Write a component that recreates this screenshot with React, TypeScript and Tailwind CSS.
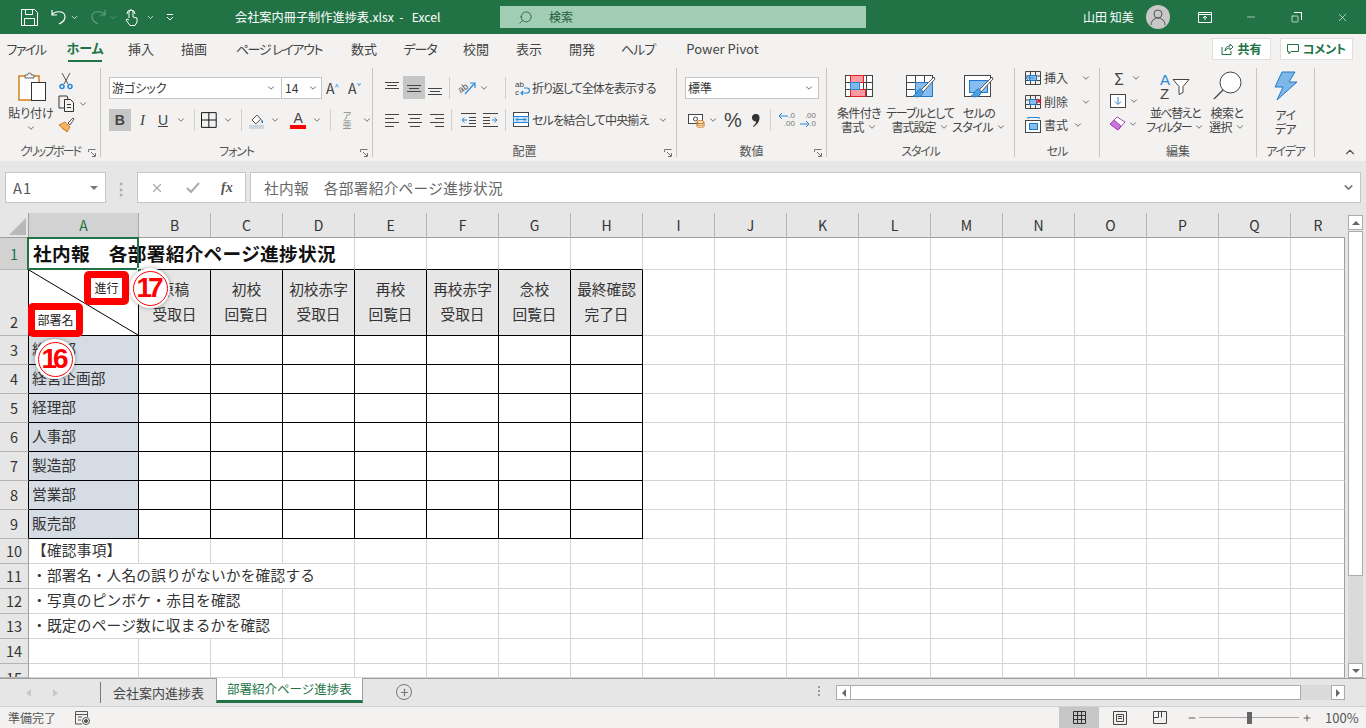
import { ReactNode } from 'react';
import { ChevronDown, ChevronUp, Minus, Plus, Search, Square, X } from 'lucide-react';

const jp = "font-['Noto_Sans_CJK_JP','Noto_Sans',sans-serif]";

const COLS = ['A', 'B', 'C', 'D', 'E', 'F', 'G', 'H', 'I', 'J', 'K', 'L', 'M', 'N', 'O', 'P', 'Q', 'R'];
const ROWS = [1, 2, 3, 4, 5, 6, 7, 8, 9, 10, 11, 12, 13, 14, 15];

const HEAD: string[][] = [
  ['原稿', '受取日'],
  ['初校', '回覧日'],
  ['初校赤字', '受取日'],
  ['再校', '回覧日'],
  ['再校赤字', '受取日'],
  ['念校', '回覧日'],
  ['最終確認', '完了日'],
];

const DEPTS = ['総務部', '経営企画部', '経理部', '人事部', '製造部', '営業部', '販売部'];

const NOTES: Record<number, string> = {
  10: '【確認事項】',
  11: '・部署名・人名の誤りがないかを確認する',
  12: '・写真のピンボケ・赤目を確認',
  13: '・既定のページ数に収まるかを確認',
};

const TABS = [
  { label: 'ファイル', cls: 'ml-[7px] w-[38px] tracking-[-1.5px]' },
  { label: 'ホーム', cls: 'ml-[23px] w-[34px] font-bold text-[#217346] border-b-[2px] border-[#217346]' },
  { label: '挿入', cls: 'ml-[26px] w-[26px]' },
  { label: '描画', cls: 'ml-[27px] w-[26px]' },
  { label: 'ページ レイアウト', cls: 'ml-[29px] w-[86px] tracking-[-1.3px]' },
  { label: '数式', cls: 'ml-[29px] w-[26px]' },
  { label: 'データ', cls: 'ml-[27px] w-[32px] tracking-[-1px]' },
  { label: '校閲', cls: 'ml-[27px] w-[26px]' },
  { label: '表示', cls: 'ml-[27px] w-[26px]' },
  { label: '開発', cls: 'ml-[27px] w-[26px]' },
  { label: 'ヘルプ', cls: 'ml-[27px] w-[32px] tracking-[-1px]' },
  { label: 'Power Pivot', cls: 'ml-[31px] w-[75px]' },
];

function Chev({ className = '' }: { className?: string }) {
  return <ChevronDown className={`w-[10px] h-[10px] text-[#555] shrink-0 ${className}`} strokeWidth={2} />;
}

function Sep({ className = '' }: { className?: string }) {
  return <div className={`w-px h-[22px] bg-[#d2d0ce] shrink-0 ${className}`} />;
}

function Launcher() {
  return (
    <svg width="8" height="8" viewBox="0 0 8 8" fill="none" stroke="#777">
      <path d="M.5 3V.5H7.5M3 3l4 4M7.5 4v3.500H4" />
    </svg>
  );
}

function Group({ label, w, launcher, labelCls = '', children }: { label: string; w: string; launcher?: boolean; labelCls?: string; children: ReactNode }) {
  return (
    <div className={`${w} h-[89px] shrink-0 flex flex-col border-r border-[#c8c6c4]`}>
      <div className="h-[77px] flex-none">{children}</div>
      <div className="h-[12px] grid grid-cols-[1fr_auto_1fr] items-center text-[12px] leading-[12px] text-[#555]">
        <span />
        <span className={labelCls}>{label}</span>
        <span className="flex justify-end pr-[4px] items-end h-full">{launcher && <Launcher />}</span>
      </div>
    </div>
  );
}

function Lines({ rows }: { rows: number[][] }) {
  return (
    <svg width="16" height="16" viewBox="0 0 16 16" stroke="#444" fill="none" className="shrink-0">
      {rows.map((r, i) => (
        <path key={i} d={`M${r[0]} ${r[2]}.5H${r[1]}`} />
      ))}
    </svg>
  );
}

function PasteIcon() {
  return (
    <svg width="30" height="30" viewBox="0 0 30 30" fill="none">
      <rect x="1" y="4" width="20" height="24" fill="#fff" stroke="#d67f16" strokeWidth="1.500" />
      <path d="M7 6V3h2.500a2 2 0 0 1 4 0H16v3z" fill="#f3f2f1" stroke="#666" />
      <rect x="13.500" y="10.500" width="14" height="18" fill="#fff" stroke="#333" />
    </svg>
  );
}

function CutIcon() {
  return (
    <svg width="14" height="18" viewBox="0 0 14 18" fill="none" stroke="#555">
      <path d="M3 1l6 11M11 1L5 12" />
      <circle cx="3" cy="14.500" r="2" stroke="#2b88d8" strokeWidth="1.500" />
      <circle cx="11" cy="14.500" r="2" stroke="#2b88d8" strokeWidth="1.500" />
    </svg>
  );
}

function CopyIcon() {
  return (
    <svg width="17" height="17" viewBox="0 0 17 17" fill="#f3f2f1" stroke="#333">
      <path d="M7 13H1V1h8l1 3" />
      <path d="M6.500 4.500h6l3 3v9h-9zM9 9.500h4M9 12.500h4" />
    </svg>
  );
}

function BrushIcon() {
  return (
    <svg width="17" height="16" viewBox="0 0 17 16" fill="none">
      <path d="M1 8l6-3 5 5-3 5z" fill="#f7b267" stroke="#d67f16" />
      <path d="M4 11l5 3" stroke="#d67f16" />
      <path d="M10 6l5-5 1 1-4 6z" fill="#fff" stroke="#555" />
    </svg>
  );
}

function AlignV({ top }: { top: number }) {
  return <Lines rows={[[1, 15, top], [3, 13, top + 3], [1, 15, top + 6]]} />;
}

function AlignH({ kind }: { kind: 'l' | 'c' | 'r' }) {
  const a = kind === 'l' ? [1, 10] : kind === 'c' ? [3, 13] : [6, 15];
  return <Lines rows={[[1, 15, 2], [a[0], a[1], 6], [1, 15, 10], [a[0], a[1], 14]]} />;
}

function OrientIcon() {
  return (
    <svg width="18" height="16" viewBox="0 0 18 16" fill="none">
      <text x="0" y="11" fontSize="9" fill="#444" transform="rotate(-35 5 8)" className="font-['Liberation_Sans']">ab</text>
      <path d="M7 14L16 4M12 3h5v5" stroke="#2b88d8" strokeWidth="1.200" />
    </svg>
  );
}

function IndentIcon({ flip }: { flip?: boolean }) {
  return (
    <svg width="15" height="14" viewBox="0 0 15 14" fill="none" stroke="#444" className={flip ? '-scale-x-100' : ''}>
      <path d="M0 .5h15M0 13.500h15M8 4.500h7M8 7.500h7M8 10.500h7" />
      <path d="M6 7H1M3.500 4.500L1 7l2.500 2.500" stroke="#2b88d8" />
    </svg>
  );
}

function WrapIcon() {
  return (
    <svg width="16" height="16" viewBox="0 0 16 16" fill="none">
      <text x="0" y="7" fontSize="8" fill="#444" className="font-['Liberation_Sans']">ab</text>
      <text x="0" y="15" fontSize="8" fill="#444" className="font-['Liberation_Sans']">c</text>
      <path d="M6 13h6a2.500 2.500 0 0 0 0-5H9M8 11l-2 2 2 2" stroke="#2b88d8" strokeWidth="1.200" />
    </svg>
  );
}

function MergeIcon() {
  return (
    <svg width="16" height="15" viewBox="0 0 16 15" fill="none">
      <rect x=".5" y=".5" width="15" height="14" fill="#fff" stroke="#444" />
      <rect x=".5" y="4.500" width="15" height="6" fill="#cfe4f7" stroke="#2b88d8" />
      <path d="M3 7.500h10M5 5.500l-2 2 2 2M11 5.500l2 2-2 2" stroke="#2b88d8" />
    </svg>
  );
}

function CurrencyIcon() {
  return (
    <svg width="17" height="16" viewBox="0 0 17 16" fill="none">
      <rect x=".5" y="2.500" width="14" height="9" fill="#fff" stroke="#444" />
      <circle cx="7.500" cy="7" r="2" stroke="#444" />
      <ellipse cx="12.500" cy="10" rx="3.500" ry="1.500" fill="#f3f2f1" stroke="#d67f16" />
      <path d="M9 10v4.500c0 1 7 1 7 0V10M9 12.500c0 1 7 1 7 0" stroke="#d67f16" />
    </svg>
  );
}

function DecIcon({ up }: { up?: boolean }) {
  return (
    <div className="w-[17px] h-[16px] flex flex-col text-[8px] leading-[8px] text-[#777] font-['Liberation_Sans'] items-end relative">
      <span>{up ? '.00' : '.0'}</span>
      <span>{up ? '.0' : '.00'}</span>
      <svg width="10" height="8" viewBox="0 0 10 8" fill="none" stroke="#2b88d8" className={`absolute ${up ? 'top-[8px] -scale-x-100 left-[1px]' : 'top-0 left-0'}`}>
        <path d="M10 4H1M4 1L1 4l3 3" />
      </svg>
    </div>
  );
}

function GridBase({ children }: { children: ReactNode }) {
  return (
    <svg width="30" height="24" viewBox="0 0 30 24" fill="none" className="shrink-0">
      {children}
    </svg>
  );
}

function CondIcon() {
  return (
    <GridBase>
      <rect x=".5" y=".5" width="27" height="21" fill="#fff" stroke="#444" />
      <path d="M9.500 .5v21M18.500 .5v21M21.500 .5v21M.5 7.500h27M.5 14.500h27" stroke="#444" />
      <rect x="5.500" y=".5" width="13" height="7" fill="#ff9aa2" stroke="#d22" />
      <rect x="5.500" y="14.500" width="15" height="7" fill="#ff9aa2" stroke="#d22" />
      <rect x="5.500" y="7.500" width="9" height="7" fill="#7db8e8" stroke="#2b88d8" />
    </GridBase>
  );
}

function TableStyleIcon({ cell }: { cell?: boolean }) {
  return (
    <GridBase>
      <rect x=".5" y=".5" width="26" height="21" fill="#fff" stroke="#444" />
      {cell ? (
        <rect x="5.500" y="5.500" width="18" height="12" fill="#86bdf0" stroke="#1f78c8" />
      ) : (
        <>
          <path d="M9.500 .5v21M18.500 .5v21M.5 7.500h26M.5 14.500h26" stroke="#444" />
          <rect x="9.500" y="7.500" width="17" height="14" fill="#86bdf0" stroke="#1f78c8" />
        </>
      )}
      <path d="M29 4L17 17l-3 1 2-4L28 2z" fill="#fff" stroke="#555" />
      <path d="M15 14c-4 0-4 5-8 7 5 2 10 0 10-4z" fill="#4aa0e0" stroke="#2b78b8" />
    </GridBase>
  );
}

function CellRowIcon({ kind }: { kind: 'ins' | 'del' | 'fmt' }) {
  return (
    <svg width="17" height="16" viewBox="0 0 17 16" fill="none" className="shrink-0">
      {kind === 'fmt' ? (
        <>
          <path d="M3 .5h11M3 0v2M14 0v2" stroke="#2b88d8" />
          <rect x=".5" y="3.500" width="15" height="12" fill="#fff" stroke="#444" />
          <rect x="4.500" y="6.500" width="8" height="6" fill="#86bdf0" stroke="#1f78c8" />
        </>
      ) : (
        <>
          <path d="M.5 1.500h15v13H.5zM.5 6h15M.5 10.500h15M5.500 1.500v13M10.500 1.500v13" stroke="#444" />
          <rect x="4.500" y="5.500" width="7" height="5" fill="#86bdf0" stroke="#1f78c8" />
          {kind === 'ins' ? (
            <path d="M9 8H1M3.500 5.500L1 8l2.500 2.500" stroke="#2b88d8" fill="none" />
          ) : (
            <path d="M12 5l4 4M16 5l-4 4" stroke="#e81123" strokeWidth="1.500" />
          )}
        </>
      )}
    </svg>
  );
}

function SortIcon() {
  return (
    <svg width="31" height="30" viewBox="0 0 31 30" fill="none">
      <text x="0" y="14" fontSize="15" fill="#2b88d8" className="font-['Liberation_Sans']">A</text>
      <text x="0" y="28" fontSize="15" fill="#444" className="font-['Liberation_Sans']">Z</text>
      <path d="M13 8.500h16l-6 7v6l-4 2v-8z" fill="#fff" stroke="#444" />
    </svg>
  );
}

function LensIcon() {
  return (
    <svg width="31" height="30" viewBox="0 0 31 30" fill="none" stroke="#444">
      <circle cx="18.500" cy="11.500" r="10.500" fill="#fff" />
      <path d="M11 19L1 29" strokeWidth="1.300" />
    </svg>
  );
}

function BoltIcon() {
  return (
    <svg width="24" height="30" viewBox="0 0 24 30" fill="none">
      <path d="M8 1h13l-6 10h8L3 29l6-13H1z" fill="#7db8e8" stroke="#1f78c8" />
    </svg>
  );
}

function LargeText({ a, b, chev, className = 'tracking-[-0.6px]' }: { a: string; b: string; chev?: boolean; className?: string }) {
  return (
    <div className={`flex flex-col items-center text-[12px] leading-[14px] text-[#444] whitespace-nowrap mt-[7px] ${className}`}>
      <span>{a}</span>
      <span className="flex items-center gap-[3px]">
        {b}
        {chev && <Chev />}
      </span>
    </div>
  );
}

function Ribbon() {
  return (
    <div className={`h-[97px] bg-[#f3f2f1] flex pt-[4px] [font-feature-settings:'palt'] ${jp}`}>
      <Group label="クリップボード" w="w-[101px]" launcher labelCls="tracking-[-2px]">
        <div className="flex pt-[4px]">
          <div className="w-[56px] ml-[3px] flex flex-col items-center">
            <div className="pl-[4px]"><PasteIcon /></div>
            <div className="text-[12px] leading-[14px] text-[#444] mt-[4px]">貼り付け</div>
            <Chev className="mt-[3px]" />
          </div>
          <div className="flex flex-col gap-[5px]">
            <div><CutIcon /></div>
            <div className="flex items-center gap-[3px] -ml-[1px]"><CopyIcon /><Chev /></div>
            <div className="-ml-[1px]"><BrushIcon /></div>
          </div>
        </div>
      </Group>

      <Group label="フォント" w="w-[272px]" launcher labelCls="tracking-[-1.200px]">
        <div className="pl-[8px] pt-[9px] flex flex-col">
          <div className="flex items-center h-[22px]">
            <div className="w-[173px] h-[22px] bg-white border border-[#c8c6c4] flex items-center justify-between px-[2px] pr-[5px] text-[12px] text-[#333]">游ゴシック<Chev /></div>
            <div className="w-[40px] h-[22px] bg-white border border-l-0 border-[#c8c6c4] flex items-center justify-between px-[3px] text-[12px] text-[#333]">14<Chev /></div>
            <span className="ml-[4px] w-[22px] text-[#444] text-[14px]">A<sup className="text-[#2b88d8] text-[8px]">^</sup></span>
            <span className="w-[20px] text-[#444] text-[14px]">A<sup className="text-[#2b88d8] text-[8px]">ˇ</sup></span>
          </div>
          <div className="flex items-center h-[22px] mt-[10px] text-[#444]">
            <div className="w-[22px] h-[22px] bg-[#c6c6c6] flex items-center justify-center font-bold text-[14px] font-['Liberation_Sans']">B</div>
            <div className="w-[22px] text-center italic text-[15px] ml-[1px] font-['Liberation_Serif']">I</div>
            <div className="w-[20px] text-center underline text-[14px] font-['Liberation_Sans']">U</div>
            <Chev className="ml-[3px]" />
            <Sep className="ml-[8px]" />
            <svg width="16" height="16" viewBox="0 0 16 16" fill="none" stroke="#111" className="ml-[6px]"><path d="M.5 .5h15v15H.5zM8 .5v15M.5 8h15" /></svg>
            <Chev className="ml-[6px]" />
            <Sep className="ml-[8px]" />
            <svg width="16" height="17" viewBox="0 0 16 17" fill="none" className="ml-[7px]">
              <path d="M3 8l5-5 4 4-5 5z" fill="#fff" stroke="#444" />
              <path d="M13 7c1 2 2 3 1 4s-2-1-1-4z" fill="#2b78b8" />
              <rect x="0" y="13" width="16" height="4" fill="#ccd6e0" />
            </svg>
            <Chev className="ml-[6px]" />
            <div className="ml-[10px] w-[16px] flex flex-col items-center">
              <span className="text-[14px] leading-[14px] font-['Liberation_Sans']">A</span>
              <span className="w-[16px] h-[4px] bg-[#ff0000]" />
            </div>
            <Chev className="ml-[6px]" />
            <Sep className="ml-[8px]" />
            <div className="ml-[9px] w-[14px] flex flex-col items-center text-[9px] leading-[9px] text-[#888]"><span>ア</span><span>亜</span></div>
            <Chev className="ml-[8px]" />
          </div>
        </div>
      </Group>

      <Group label="配置" w="w-[304px]" launcher>
        <div className="pl-[11px] pt-[8px] flex flex-col">
          <div className="flex items-center h-[23px]">
            <AlignV top={2} />
            <div className="ml-[3px] w-[22px] h-[23px] bg-[#c6c6c6] flex items-center justify-center"><AlignV top={5} /></div>
            <div className="ml-[2px]"><AlignV top={8} /></div>
            <Sep className="ml-[6px]" />
            <div className="ml-[8px]"><OrientIcon /></div>
            <Chev className="ml-[3px]" />
            <Sep className="ml-[16px]" />
            <div className="ml-[9px]"><WrapIcon /></div>
            <span className="ml-[1px] text-[12px] text-[#444] tracking-[-1px]">折り返して全体を表示する</span>
          </div>
          <div className="flex items-center h-[23px] mt-[9px]">
            <AlignH kind="l" />
            <div className="ml-[7px]"><AlignH kind="c" /></div>
            <div className="ml-[6px]"><AlignH kind="r" /></div>
            <Sep className="ml-[6px]" />
            <div className="ml-[9px]"><IndentIcon /></div>
            <div className="ml-[7px]"><IndentIcon flip /></div>
            <Sep className="ml-[7px]" />
            <div className="ml-[7px]"><MergeIcon /></div>
            <span className="ml-[3px] text-[12px] text-[#444] tracking-[-0.800px]">セルを結合して中央揃え</span>
            <Chev className="ml-[9px]" />
          </div>
        </div>
      </Group>

      <Group label="数値" w="w-[150px]" launcher>
        <div className="pl-[8px] pt-[9px] flex flex-col">
          <div className="w-[134px] h-[22px] bg-white border border-[#c8c6c4] flex items-center justify-between pl-[2px] pr-[4px] text-[12px] text-[#333]">標準<Chev /></div>
          <div className="flex items-center h-[22px] mt-[10px] text-[#444]">
            <div className="ml-[3px]"><CurrencyIcon /></div>
            <Chev className="ml-[3px]" />
            <span className="ml-[5px] w-[20px] text-[20px] leading-[22px] font-['Liberation_Sans'] text-center">%</span>
            <svg width="8" height="13" viewBox="0 0 8 13" className="ml-[9px]" fill="#333"><path d="M3.500 0a3.500 3.500 0 0 1 4 4c0 4-3 7-6 9l-.5-1c2-1.500 3-3 3-4.500C2 7.500 0 6 0 4a3.500 3.500 0 0 1 3.500-4z" /></svg>
            <Sep className="ml-[10px]" />
            <div className="ml-[7px]"><DecIcon /></div>
            <div className="ml-[4px]"><DecIcon up /></div>
          </div>
        </div>
      </Group>

      <Group label="スタイル" w="w-[188px]" labelCls="tracking-[-1.200px]">
        <div className="flex pt-[7px]">
          <div className="w-[62px] ml-[1px] flex flex-col items-center"><div className="pl-[2px]"><CondIcon /></div><LargeText a="条件付き" b="書式" chev /></div>
          <div className="w-[60px] flex flex-col items-center"><div className="pl-[2px]"><TableStyleIcon /></div><LargeText a="テーブルとして" b="書式設定" chev className="tracking-[-1px]" /></div>
          <div className="w-[58px] flex flex-col items-center"><TableStyleIcon cell /><LargeText a="セルの" b="スタイル" chev /></div>
        </div>
      </Group>

      <Group label="セル" w="w-[85px]" labelCls="tracking-[-1px]">
        <div className="pl-[10px] pt-[2px] flex flex-col gap-[7.500px] text-[12px] leading-[16px] text-[#444]">
          <div className="flex items-center"><CellRowIcon kind="ins" /><span className="ml-[2px] w-[37px]">挿入</span><Chev /></div>
          <div className="flex items-center"><CellRowIcon kind="del" /><span className="ml-[2px] w-[37px]">削除</span><Chev /></div>
          <div className="flex items-center"><CellRowIcon kind="fmt" /><span className="ml-[2px] w-[29px]">書式</span><Chev /></div>
        </div>
      </Group>

      <Group label="編集" w="w-[157px]">
        <div className="flex pt-[2px]">
          <div className="ml-[9px] w-[38px] flex flex-col gap-[7px] text-[#444]">
            <div className="flex items-center h-[16px]"><span className="w-[20px] text-center text-[16px] leading-[16px]">Σ</span><Chev className="ml-[2px]" /></div>
            <div className="flex items-center h-[16px]">
              <svg width="16" height="16" viewBox="0 0 16 16" fill="none" className="ml-[1px]"><rect x=".5" y="1.500" width="15" height="13" fill="#fff" stroke="#444" /><path d="M8 4v7M5 8.500l3 3 3-3" stroke="#2b88d8" /></svg>
              <Chev className="ml-[3px]" />
            </div>
            <div className="flex items-center h-[16px]">
              <svg width="17" height="16" viewBox="0 0 17 16" fill="none"><path d="M1 8l7-7 8 5-7 8z" fill="#fff" stroke="#a644b8" /><path d="M1 8l4-4 7 6-3 4z" fill="#c878d8" stroke="#a644b8" /></svg>
              <Chev className="ml-[2px]" />
            </div>
          </div>
          <div className="w-[52px] ml-[2px] flex flex-col items-center pt-[1px]"><div className="h-[28px] overflow-hidden"><SortIcon /></div><LargeText a="並べ替えと" b="フィルター" chev className="tracking-[-1.500px]" /></div>
          <div className="w-[30px] ml-[11px] flex flex-col items-center pt-[1px]"><div className="h-[28px] overflow-hidden"><LensIcon /></div><LargeText a="検索と" b="選択" chev /></div>
        </div>
      </Group>

      <Group label="アイデア" w="w-[58px]" labelCls="tracking-[-1.200px]">
        <div className="flex flex-col items-center pt-[3px]">
          <BoltIcon />
          <LargeText a="アイ" b="デア" />
        </div>
      </Group>

      <div className="flex-1 flex justify-end items-end pr-[9px] pb-[2px]">
        <ChevronUp className="w-[14px] h-[14px] text-[#555]" />
      </div>
    </div>
  );
}

function TitleBar() {
  return (
    <div className={`h-[34px] bg-[#217346] flex items-center text-white ${jp}`}>
      <svg width="17" height="17" viewBox="0 0 17 17" fill="none" stroke="#fff" className="ml-[21px]">
        <path d="M.5 .5h13l3 3v13H.5zM4.500 .5v5h7v-5M3.500 16.500v-7h10v7" />
      </svg>
      <svg width="16" height="16" viewBox="0 0 16 16" fill="none" stroke="#fff" strokeWidth="1.200" className="ml-[13px]">
        <path d="M1 1v5h5M1 6c2-4 12-5 13 1 .5 3-2 6-6 8" />
      </svg>
      <ChevronDown className="w-[9px] h-[9px] ml-[3px]" />
      <svg width="16" height="16" viewBox="0 0 16 16" fill="none" stroke="#5f9c7b" strokeWidth="1.200" className="ml-[11px] -scale-x-100">
        <path d="M1 1v5h5M1 6c2-4 12-5 13 1 .5 3-2 6-6 8" />
      </svg>
      <ChevronDown className="w-[9px] h-[9px] ml-[3px] text-[#5f9c7b]" />
      <svg width="14" height="17" viewBox="0 0 14 17" fill="none" stroke="#fff" className="ml-[7px]">
        <path d="M4 9V3a2 2 0 0 1 4 0v5l4 1v4l-2 3.500H5L1 11l1-1 2 1" />
        <path d="M2 5a4 4 0 0 1 8 0" />
      </svg>
      <ChevronDown className="w-[9px] h-[9px] ml-[7px]" />
      <svg width="8" height="8" viewBox="0 0 8 8" fill="none" stroke="#fff" className="ml-[11px]">
        <path d="M1 1.500h6M1 4l3 3 3-3" />
      </svg>
      <div className="ml-[61px] w-[265px] text-[12.200px] whitespace-nowrap">会社案内冊子制作進捗表.xlsx&nbsp;&nbsp;-&nbsp;&nbsp;&nbsp;Excel</div>
      <div className="w-[366px] h-[22px] bg-[#a0cdb4] flex items-center text-[#1e5b3a] text-[12px]">
        <Search className="w-[15px] h-[15px] ml-[18px] -scale-x-100" strokeWidth={1.300} />
        <span className="ml-[16px]">検索</span>
      </div>
      <div className="ml-[217px] w-[52px] text-[12px] whitespace-nowrap">山田 知美</div>
      <div className="ml-[11px] w-[24px] h-[24px] rounded-full bg-[#c8c8c8] flex items-center justify-center">
        <svg width="16" height="16" viewBox="0 0 16 16" fill="none" stroke="#555"><circle cx="8" cy="5" r="4" /><path d="M1 16c0-4 3-7 7-7s7 3 7 7" /></svg>
      </div>
      <svg width="14" height="11" viewBox="0 0 14 11" fill="none" stroke="#fff" className="ml-[28px]"><path d="M.5 .5h13v10H.5zM.5 2.500h13M7 8V4M5 6l2-2 2 2" /></svg>
      <Minus className="w-[12px] h-[12px] ml-[33px]" strokeWidth={1.200} />
      <div className="ml-[34px] w-[11px] h-[11px] relative">
        <Square className="w-[8px] h-[8px] absolute left-0 bottom-0" strokeWidth={2} />
        <div className="absolute right-0 top-0 w-[8px] h-[8px] border-t border-r border-white" />
      </div>
      <X className="w-[13px] h-[13px] ml-[34px]" strokeWidth={1.200} />
    </div>
  );
}

function TabRow() {
  return (
    <div className={`h-[30px] bg-[#f3f2f1] flex items-start text-[13px] text-[#444] [font-feature-settings:'palt'] ${jp}`}>
      {TABS.map((t) => (
        <div key={t.label} className={`${t.cls} h-[28px] pt-[2px] whitespace-nowrap flex items-center justify-center`}>
          {t.label}
        </div>
      ))}
      <div className="ml-auto flex items-center font-bold text-[12px] text-[#217346] pr-[13px] pt-[4px]">
        <div className="w-[59px] h-[22px] bg-white border border-[#e1dfdd] flex items-center justify-center gap-[4px]">
          <svg width="12" height="12" viewBox="0 0 12 12" fill="none" stroke="#217346"><path d="M1 4v7.500h9V8M4 8c0-3 2-5 5-5V1l3 3-3 3V5C7 5 5 6 4 8z" /></svg>
          共有
        </div>
        <div className="ml-[9px] w-[73px] h-[22px] bg-white border border-[#e1dfdd] flex items-center justify-center gap-[4px]">
          <svg width="12" height="12" viewBox="0 0 12 12" fill="none" stroke="#217346"><path d="M.5 1.500h11v7H4l-2 2.500V8.500H.5z" /></svg>
          コメント
        </div>
      </div>
    </div>
  );
}

function FormulaBar() {
  return (
    <div className={`h-[52px] bg-[#e6e6e6] flex items-start pt-[11px] pl-[5px] pr-[5px] ${jp}`}>
      <div className="w-[101px] h-[31px] bg-white border border-[#c8c6c4] flex items-center justify-between pl-[7px] pr-[7px] text-[14.670px] tracking-[1px] text-[#555]">
        A1
        <span className="w-0 h-0 border-x-[4px] border-x-transparent border-t-[4px] border-t-[#777]" />
      </div>
      <div className="w-[31px] h-[31px] flex items-center justify-center text-[#aaa] font-bold tracking-[1px]">⋮</div>
      <div className="w-[109px] h-[31px] bg-white border border-[#c8c6c4] flex items-center text-[#aaa]">
        <X className="w-[14px] h-[14px] ml-[12px]" />
        <svg width="14" height="12" viewBox="0 0 14 12" fill="none" stroke="#aaa" strokeWidth="2" className="ml-[22px]"><path d="M1 6l4 4 8-9" /></svg>
        <span className="ml-[21px] text-[14px] italic font-bold text-[#555] font-['Liberation_Serif']">fx</span>
      </div>
      <div className="ml-[4px] flex-1 h-[31px] bg-white border border-[#c8c6c4] flex items-center justify-between pl-[13px] pr-[5px] text-[14.670px] tracking-[0.3px] text-[#666]">
        社内報　各部署紹介ページ進捗状況
        <ChevronDown className="w-[13px] h-[13px] text-[#777]" strokeWidth={3} />
      </div>
    </div>
  );
}

function headerCell(c: string) {
  const active = c === 'A';
  const right = c === 'R' ? '' : active ? 'border-r border-r-[#aaa]' : 'border-r border-r-[#b5b5b5]';
  return (
    <div
      key={c}
      className={`flex items-center justify-center text-[14px] border-b ${right} ${
        active ? 'bg-[#d2d2d2] text-[#217346] border-b-[#217346]' : 'bg-[#e6e6e6] text-[#333] border-b-[#9e9e9e]'
      }`}
    >
      {c}
    </div>
  );
}

function rowHeader(r: number) {
  const dark = r >= 2 && r <= 9;
  const place = r === 2 ? 'items-end pb-[2px]' : r === 15 ? 'items-start pt-[3px]' : 'items-center';
  return (
    <div
      key={`h${r}`}
      className={`flex ${place} justify-center text-[14.500px] border-r border-b border-b-[#b5b5b5] overflow-hidden ${
        r === 1 ? 'bg-[#d2d2d2] text-[#217346] border-r-[#217346]' : 'bg-[#e6e6e6] text-[#333]'
      } ${dark ? 'border-r-black' : r === 1 ? '' : 'border-r-[#9e9e9e]'}`}
    >
      {r}
    </div>
  );
}

function Cell({ r, c }: { r: number; c: number }) {
  const table = r >= 2 && r <= 9 && c <= 7;
  const noRight = (r === 1 && c < 3) || (r === 11 && c < 3) || ((r === 12 || r === 13) && c < 2);
  const blackBottom = table || (r === 1 && c <= 7);
  const fill = r === 2 && c >= 1 && c <= 7 ? 'bg-[#e7e6e6]' : r >= 3 && r <= 9 && c === 0 ? 'bg-[#d6dce4]' : '';
  const right = table ? 'border-r border-r-black' : noRight ? '' : c === 17 ? 'border-r border-r-[#9e9e9e]' : 'border-r border-r-[#d4d4d4]';
  const bottom = blackBottom ? 'border-b-black' : 'border-b-[#d4d4d4]';
  const base = `border-b ${bottom} ${right} ${fill} min-w-0`;

  if (r === 1 && c === 0) {
    return (
      <div className={`${base} flex items-center pl-[4px] pb-[2px] text-[18.670px] tracking-[0.3px] font-bold text-[#111] whitespace-nowrap`}>
        社内報　各部署紹介ページ進捗状況
      </div>
    );
  }
  if (r === 2 && c === 0) {
    return (
      <div className={`${base} relative`}>
        <svg className="absolute inset-0 w-full h-full" viewBox="0 0 109 65" preserveAspectRatio="none">
          <path d="M0 0L109 65" stroke="#000" />
        </svg>
      </div>
    );
  }
  if (r === 2 && c >= 1 && c <= 7) {
    return (
      <div className={`${base} flex flex-col items-center justify-center pb-[4px] text-[14.670px] leading-[25px] text-[#333]`}>
        <span>{HEAD[c - 1][0]}</span>
        <span>{HEAD[c - 1][1]}</span>
      </div>
    );
  }
  if (r >= 3 && r <= 9 && c === 0) {
    return <div className={`${base} flex items-center pl-[3px] pb-[2px] text-[14.670px] text-[#333] whitespace-nowrap`}>{DEPTS[r - 3]}</div>;
  }
  if (NOTES[r] && c === 0) {
    return <div className={`${base} flex items-center pl-[3px] pb-[2px] text-[14.670px] tracking-[0.25px] text-[#333] whitespace-nowrap`}>{NOTES[r]}</div>;
  }
  return <div className={base} />;
}

function Callout({ className, text }: { className: string; text: string }) {
  return (
    <div className={`absolute bg-[#ff0000] rounded-[5px] flex items-center justify-center ${className}`}>
      <div className="bg-white flex items-center justify-center text-[12px] text-[#222] w-full h-full whitespace-nowrap">{text}</div>
    </div>
  );
}

function Badge({ className, text }: { className: string; text: string }) {
  return (
    <div className={`absolute w-[40px] h-[40px] rounded-full bg-white shadow-[0_0_4px_rgba(0,0,0,0.35)] flex items-center justify-center ${className}`}>
      <div className="w-[35px] h-[35px] rounded-full border border-[#ff0000] flex items-center justify-center text-[#ff0000] font-bold text-[28px] tracking-[-4px] pr-[4px] font-['Liberation_Sans']">
        {text}
      </div>
    </div>
  );
}

function Sheet() {
  return (
    <div className={`h-[465px] flex bg-white ${jp}`}>
      <div className="relative w-[1345px] overflow-hidden">
        <div className="grid grid-cols-[29px_110px_repeat(16,72px)_54px] grid-rows-[25px_32px_66px_repeat(7,29px)_repeat(5,25px)_14px] w-[1345px] h-[465px]">
          <div className="bg-[#e6e6e6] border-r border-b border-[#9e9e9e] flex items-end justify-end p-[2px]">
            <span className="w-0 h-0 border-l-[17px] border-l-transparent border-b-[17px] border-b-[#b8b8b8]" />
          </div>
          {COLS.map(headerCell)}
          {ROWS.map((r) => [rowHeader(r), ...COLS.map((_, c) => <Cell key={`${r}-${c}`} r={r} c={c} />)])}
        </div>

        {/* selection and the callouts that lie over the sheet */}
        <div className="absolute left-[27px] top-[24px] w-[112px] h-[33px] border-2 border-[#217346]" />
        <div className="absolute left-[137px] top-[55px] w-[5px] h-[5px] bg-[#217346] border border-white" />
        <Callout className="left-[84px] top-[58px] w-[45px] h-[34px] p-[7px]" text="進行" />
        <Callout className="left-[28px] top-[90px] w-[55px] h-[34px] p-[7px]" text="部署名" />
        <Badge className="left-[130px] top-[55px]" text="17" />
        <Badge className="left-[35px] top-[126px]" text="16" />
      </div>

      {/* vertical scrollbar */}
      <div className="w-[21px] bg-[#e6e6e6] flex flex-col items-center pt-[2px]">
        <div className="w-[15px] h-[15px] bg-white border border-[#ababab] flex items-center justify-center">
          <span className="w-0 h-0 border-x-[4px] border-x-transparent border-b-[4px] border-b-[#666]" />
        </div>
        <div className="w-[15px] h-[345px] mt-px bg-white border border-[#ababab]" />
        <div className="w-[15px] flex-1 bg-[#dadada]" />
        <div className="w-[15px] h-[15px] bg-white border border-[#ababab] flex items-center justify-center">
          <span className="w-0 h-0 border-x-[4px] border-x-transparent border-t-[4px] border-t-[#666]" />
        </div>
      </div>
    </div>
  );
}

function SheetTabs() {
  return (
    <div className={`h-[28px] bg-[#e6e6e6] border-t border-[#9e9e9e] flex ${jp}`}>
      <div className="w-[100px] flex items-center pl-[26px] gap-[22px] text-[#c0c0c0]">
        <span className="w-0 h-0 border-y-[4px] border-y-transparent border-r-[5px] border-r-[#c8c8c8]" />
        <span className="w-0 h-0 border-y-[4px] border-y-transparent border-l-[5px] border-l-[#c8c8c8]" />
      </div>
      <div className="w-[116px] h-[21px] mt-[3px] border-l border-[#777] flex items-center justify-center text-[#444] text-[13px]">会社案内進捗表</div>
      <div className="w-[147px] h-[25px] -mt-px bg-white border-x border-[#9e9e9e] border-b-[3px] border-b-[#217346] flex items-center justify-center text-[#217346] text-[12.500px]">部署紹介ページ進捗表</div>
      <div className="ml-[33px] mt-[5px] w-[16px] h-[16px] rounded-full border border-[#777] flex items-center justify-center text-[#777]">
        <Plus className="w-[11px] h-[11px]" strokeWidth={2.500} />
      </div>
      <div className="ml-[406px] mt-[7px] flex flex-col gap-[2px]">
        <span className="w-[2px] h-[2px] bg-[#999]" />
        <span className="w-[2px] h-[2px] bg-[#999]" />
        <span className="w-[2px] h-[2px] bg-[#999]" />
      </div>
      <div className="ml-[16px] mt-[6px] w-[509px] h-[15px] flex bg-[#dadada]">
        <div className="w-[15px] bg-white border border-[#ababab] flex items-center justify-center">
          <span className="w-0 h-0 border-y-[4px] border-y-transparent border-r-[4px] border-r-[#666]" />
        </div>
        <div className="w-[450px] bg-white border-y border-r border-[#ababab]" />
        <div className="flex-1" />
        <div className="w-[14px] bg-white border border-[#ababab] flex items-center justify-center">
          <span className="w-0 h-0 border-y-[4px] border-y-transparent border-l-[4px] border-l-[#666]" />
        </div>
      </div>
    </div>
  );
}

function StatusBar() {
  return (
    <div className={`h-[22px] bg-[#f3f2f1] border-t border-[#d2d0ce] flex items-center text-[12px] text-[#555] ${jp}`}>
      <span className="ml-[8px] w-[48px]">準備完了</span>
      <svg width="15" height="14" viewBox="0 0 15 14" fill="none" stroke="#555" className="ml-[19px]">
        <path d="M7 13H.5V.5h12V6M.5 3.500h12M3 6h4M3 9h3" />
        <circle cx="11" cy="10" r="3.500" />
        <circle cx="11" cy="10" r="1.500" fill="#555" />
      </svg>
      <div className="ml-auto flex items-center h-full">
        <div className="w-[40px] h-[21px] bg-[#c6c6c6] flex items-center justify-center">
          <svg width="13" height="13" viewBox="0 0 13 13" fill="none" stroke="#333"><path d="M.5 .5h12v12H.5zM4.500 .5v12M8.500 .5v12M.5 4.500h12M.5 8.500h12" /></svg>
        </div>
        <svg width="14" height="14" viewBox="0 0 14 14" fill="none" stroke="#444" className="ml-[14px]"><path d="M.5 .5h13v13H.5zM3.500 3.500h7v7h-7zM5 5.500h4M5 7.500h4" /></svg>
        <svg width="14" height="13" viewBox="0 0 14 13" fill="none" stroke="#444" className="ml-[26px]"><path d="M.5 .5h13v12H.5zM5.500 .5v6h-5M8.500 .5v6" /></svg>
        <Minus className="w-[10px] h-[10px] ml-[20px] text-[#444]" />
        <div className="ml-[2px] w-[100px] h-[1px] bg-[#aaa] flex items-center justify-center">
          <span className="w-[5px] h-[12px] bg-[#666]" />
        </div>
        <Plus className="w-[10px] h-[10px] ml-[3px] text-[#444]" />
        <span className="ml-[13px] mr-[8px] w-[33px] text-[13px]">100%</span>
      </div>
    </div>
  );
}

export default function App() {
  return (
    <div className="w-[1366px] h-[728px] overflow-hidden flex flex-col bg-white">
      <TitleBar />
      <TabRow />
      <Ribbon />
      <FormulaBar />
      <Sheet />
      <SheetTabs />
      <StatusBar />
    </div>
  );
}
